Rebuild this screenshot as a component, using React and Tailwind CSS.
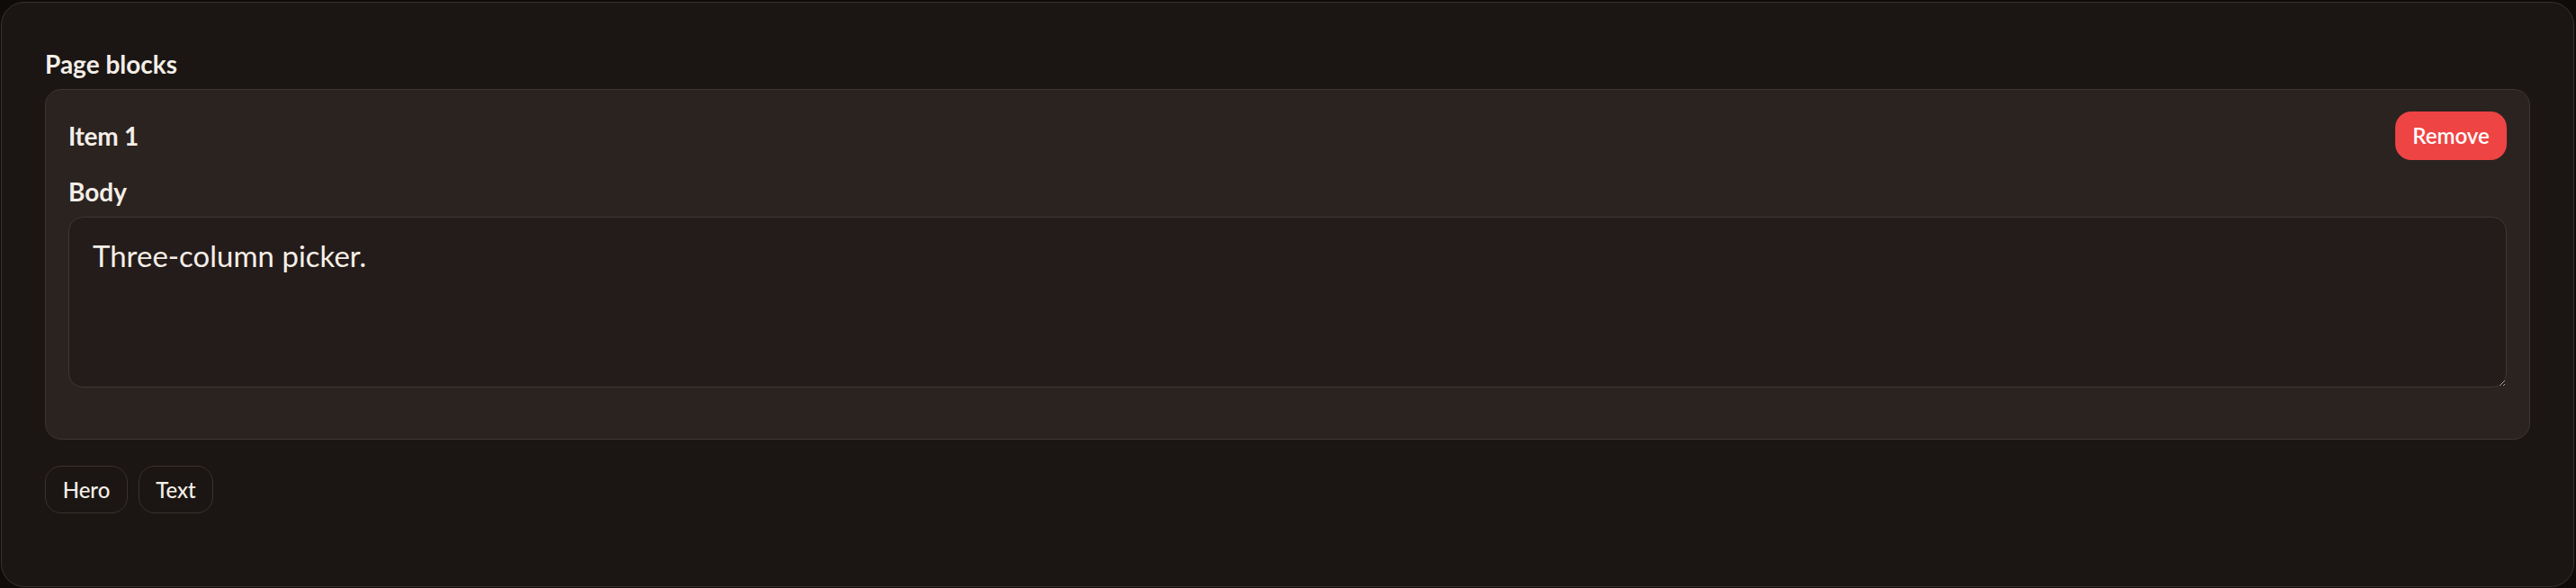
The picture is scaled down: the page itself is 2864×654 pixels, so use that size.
import { useState } from "react"

const blocks = [{ id: 1, title: "Item 1", body: "Three-column picker." }]

export default function App() {
  const [items, setItems] = useState(blocks)

  function removeItem(id) {
    setItems((prev) => prev.filter((item) => item.id !== id))
  }

  return (
    <div className="min-h-[654px] bg-[#0e0b09] pl-[1px] pt-[2px] font-['Lato',sans-serif] text-[#f4eee8]">
      <div className="h-[651px] w-[2861px] rounded-[26px] border border-[#3a322f] bg-[#1b1613] px-[48px] pt-[48px]">
        <h2 className="text-[28px] font-bold leading-[40px]">Page blocks</h2>

        <div className="mt-[8px] flex flex-col gap-[16px]">
          {items.map((item) => (
            <div
              key={item.id}
              className="rounded-[18px] border border-[#3d3532] bg-[#2b2320] px-[25px] pb-[57px] pt-[24px]"
            >
              <div className="flex items-center justify-between">
                <h3 className="text-[28px] font-bold leading-[40px] tracking-[-0.3px]">{item.title}</h3>
                <button
                  onClick={() => removeItem(item.id)}
                  className="h-[54px] w-[124px] rounded-[18px] bg-[#ef4444] text-[24px] font-semibold text-white"
                >
                  Remove
                </button>
              </div>

              <label className="mt-[15px] block text-[28px] font-bold leading-[40px]">Body</label>
              <textarea
                defaultValue={item.body}
                className="mt-[8px] block h-[190px] w-full rounded-[16px] border border-[#3f3734] bg-[#241c1a] px-[26px] pt-[18px] text-[33px] leading-[48px] text-[#f4eee8] outline-none"
              />
            </div>
          ))}
        </div>

        <div className="mt-[29px] flex gap-[12px]">
          <button className="h-[53px] w-[92px] rounded-[18px] border border-[#3a322f] text-[24px] font-medium">
            Hero
          </button>
          <button className="h-[53px] w-[83px] rounded-[18px] border border-[#3a322f] text-[24px] font-medium">
            Text
          </button>
        </div>
      </div>
    </div>
  )
}
